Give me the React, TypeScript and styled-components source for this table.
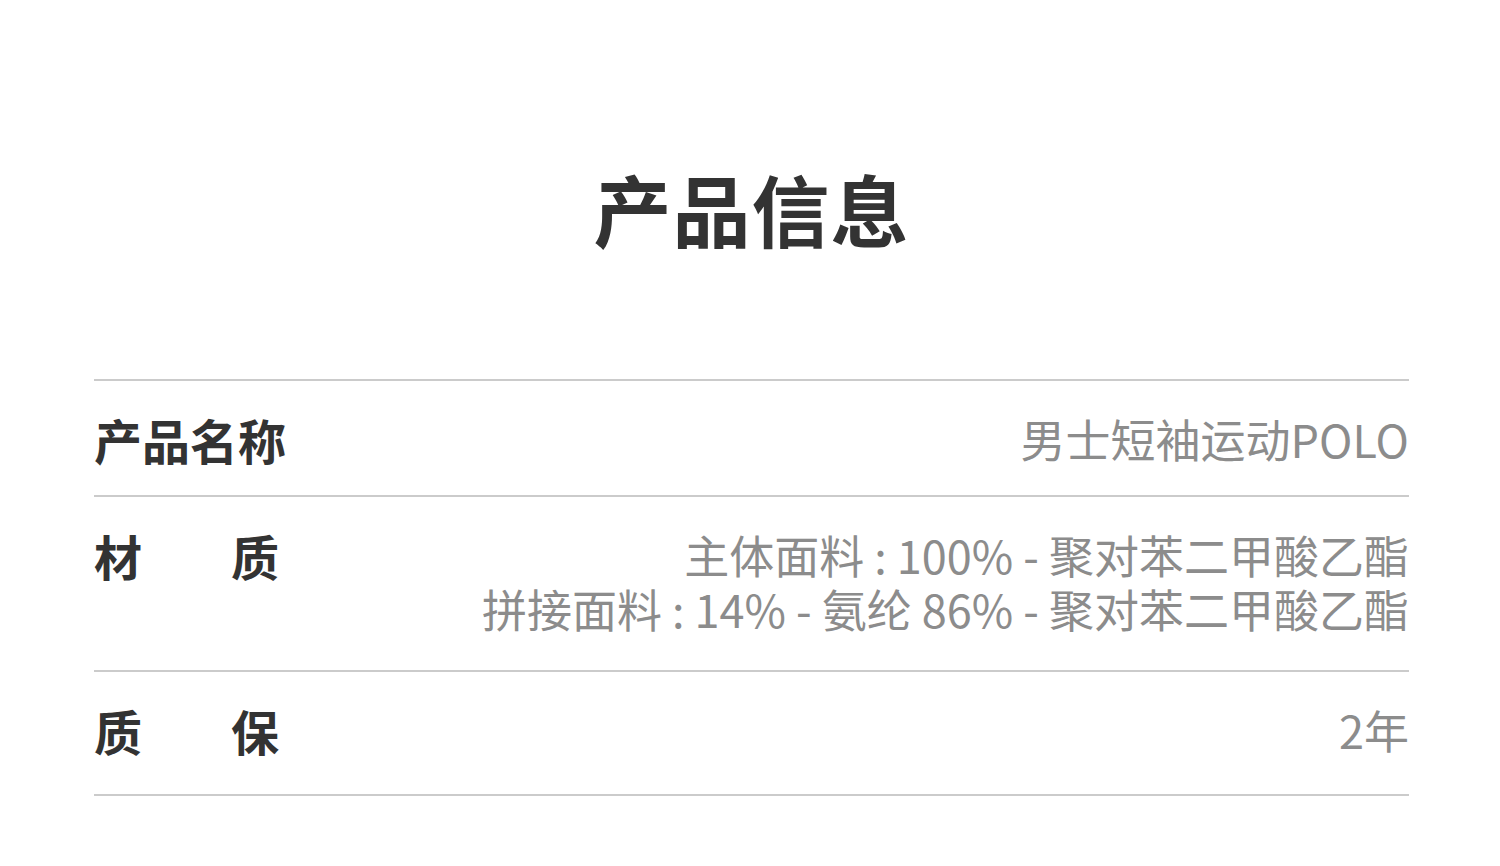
import styled, { createGlobalStyle } from "styled-components"

const GlobalStyle = createGlobalStyle`
  body {
    margin: 0;
    background: #ffffff;
    font-family: "Noto Sans CJK SC", "Noto Sans", sans-serif;
  }
`

const Page = styled.main`
  width: 1500px;
  min-height: 866px;
  padding: 0 91px 0 94px;
  box-sizing: border-box;
`

const Title = styled.h1`
  margin: 0;
  padding-top: 166px;
  height: 379px;
  box-sizing: border-box;
  text-align: center;
  font-size: 78px;
  line-height: 84px;
  font-weight: 700;
  color: #333333;
  letter-spacing: 1px;
`

const Table = styled.div`
  border-bottom: 2px solid #cbcbcb;
`

const Row = styled.div<{ $tail: number }>`
  display: flex;
  justify-content: space-between;
  align-items: flex-start;
  border-top: 2px solid #cbcbcb;
  padding: 31px 0 ${(p) => p.$tail}px;
`

const Label = styled.div<{ $spread?: boolean }>`
  display: flex;
  justify-content: ${(p) => (p.$spread ? "space-between" : "flex-start")};
  width: ${(p) => (p.$spread ? "185px" : "auto")};
  font-size: 48px;
  line-height: 54px;
  font-weight: 700;
  color: #333333;
  white-space: nowrap;
`

const Value = styled.div`
  text-align: right;
  font-size: 45px;
  line-height: 54px;
  font-weight: 400;
  color: #8c8c8c;
  white-space: nowrap;
`

const rows = [
  { label: ["产品名称"], values: ["男士短袖运动POLO"], tail: 29 },
  {
    label: ["材", "质"],
    values: ["主体面料 : 100% - 聚对苯二甲酸乙酯", "拼接面料 : 14% - 氨纶 86% - 聚对苯二甲酸乙酯"],
    tail: 34,
  },
  { label: ["质", "保"], values: ["2年"], tail: 37 },
]

export default function App() {
  return (
    <Page>
      <GlobalStyle />
      <Title>产品信息</Title>
      <Table>
        {rows.map((row, i) => (
          <Row key={i} $tail={row.tail}>
            <Label $spread={row.label.length > 1}>
              {row.label.map((part) => (
                <span key={part}>{part}</span>
              ))}
            </Label>
            <Value>
              {row.values.map((v) => (
                <div key={v}>{v}</div>
              ))}
            </Value>
          </Row>
        ))}
      </Table>
    </Page>
  )
}
